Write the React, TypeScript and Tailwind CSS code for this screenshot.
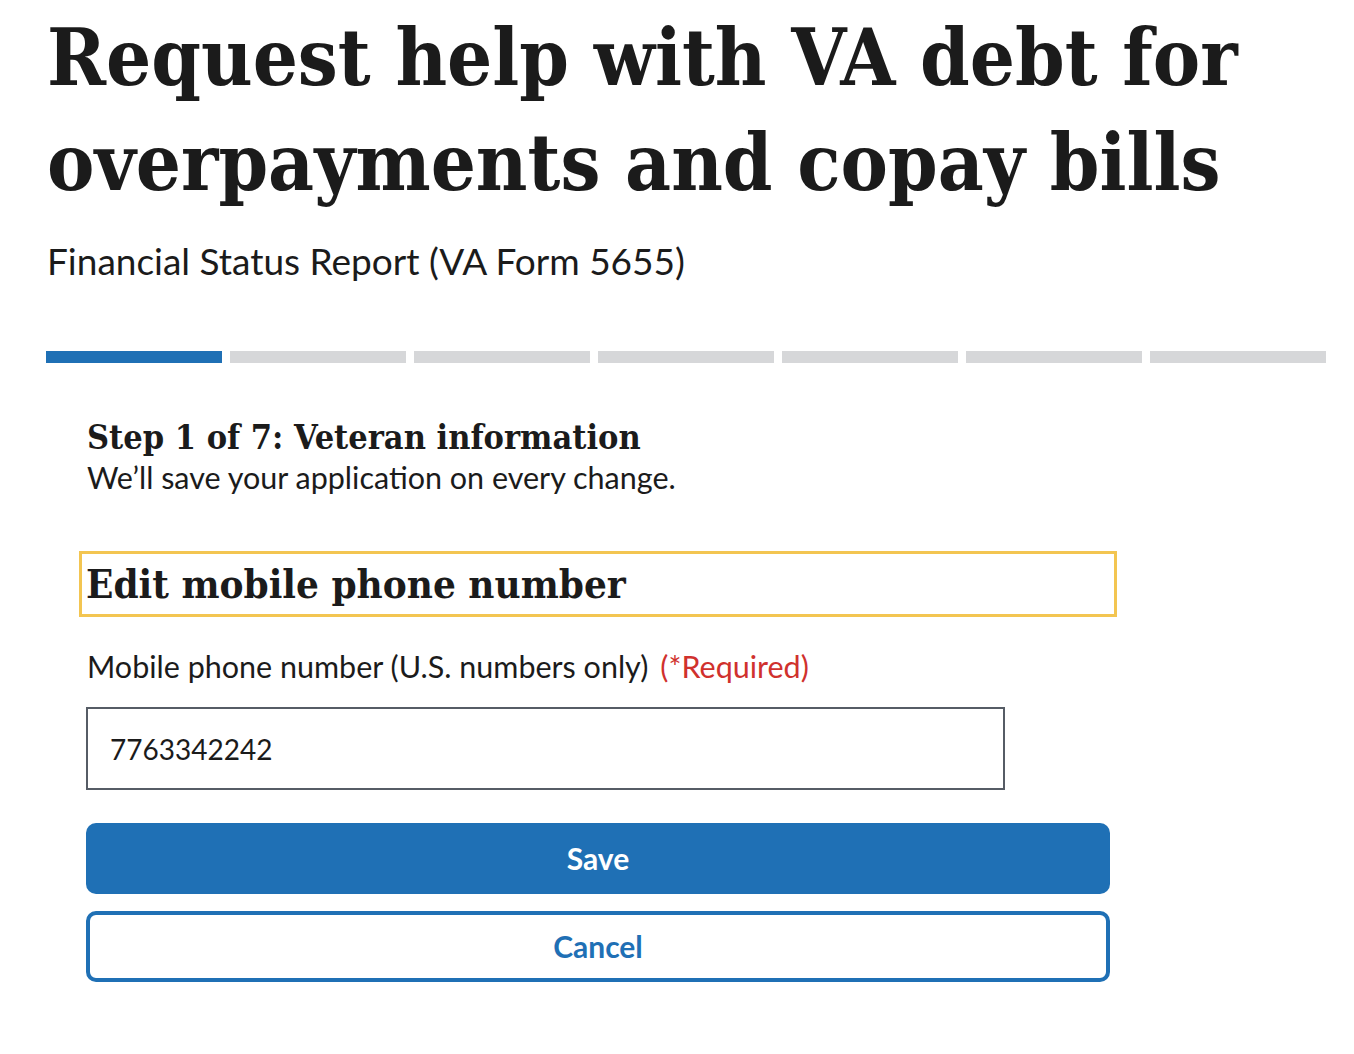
const serif = "font-['DejaVu_Serif_Condensed','DejaVu_Serif',serif]";

export default function App() {
  const steps = [0, 1, 2, 3, 4, 5, 6];
  return (
    <div className="min-h-screen bg-white text-[#1b1b1b] font-['Lato',sans-serif]">
      <div className="pl-[47px] pr-[28px]">
        <h1 className={`${serif} pt-[5px] text-[79px] leading-[105px] font-bold`}>
          Request help with VA debt for
          <br />
          overpayments and copay bills
        </h1>
        <p className="mt-[22px] text-[37px] leading-[48px]">Financial Status Report (VA Form 5655)</p>

        <div className="mt-[66px] -ml-px flex gap-[8px]">
          {steps.map((i) => (
            <div
              key={i}
              className={i === 0 ? "h-[12px] w-[176px] bg-[#1f70b5]" : "h-[12px] w-[176px] bg-[#d6d7d9]"}
            />
          ))}
        </div>

        <div className="pl-[40px]">
          <h2 className={`${serif} mt-[54px] text-[34px] leading-[40px] font-bold`}>
            Step 1 of 7: Veteran information
          </h2>
          <p className="mt-[2px] text-[30.5px] leading-[36px]">We’ll save your application on every change.</p>
        </div>

        <div className="mt-[56px] ml-[32px] w-[1038px] h-[66px] border-[3px] border-[#f3c551] pl-[4px]">
          <h3 className={`${serif} text-[40px] leading-[60px] font-bold`}>Edit mobile phone number</h3>
        </div>

        <div className="pl-[40px]">
          <label className="mt-[31px] block text-[30.5px] leading-[36px]">
            Mobile phone number (U.S. numbers only)
            <span className="ml-[12px] text-[#d0312d]">(*Required)</span>
          </label>

          <div className="mt-[23px] -ml-px flex h-[83px] w-[919px] items-center border-2 border-[#565c65] pl-[22px] text-[28px]">
            7763342242
          </div>

          <button className="mt-[33px] -ml-px flex h-[71px] w-[1024px] items-center justify-center rounded-[10px] bg-[#1f70b5] text-[30px] font-bold text-white">
            Save
          </button>
          <button className="mt-[17px] -ml-px flex h-[71px] w-[1024px] items-center justify-center rounded-[10px] border-4 border-[#1f70b5] bg-white text-[30px] font-bold text-[#1f70b5]">
            Cancel
          </button>
        </div>
      </div>
    </div>
  );
}
